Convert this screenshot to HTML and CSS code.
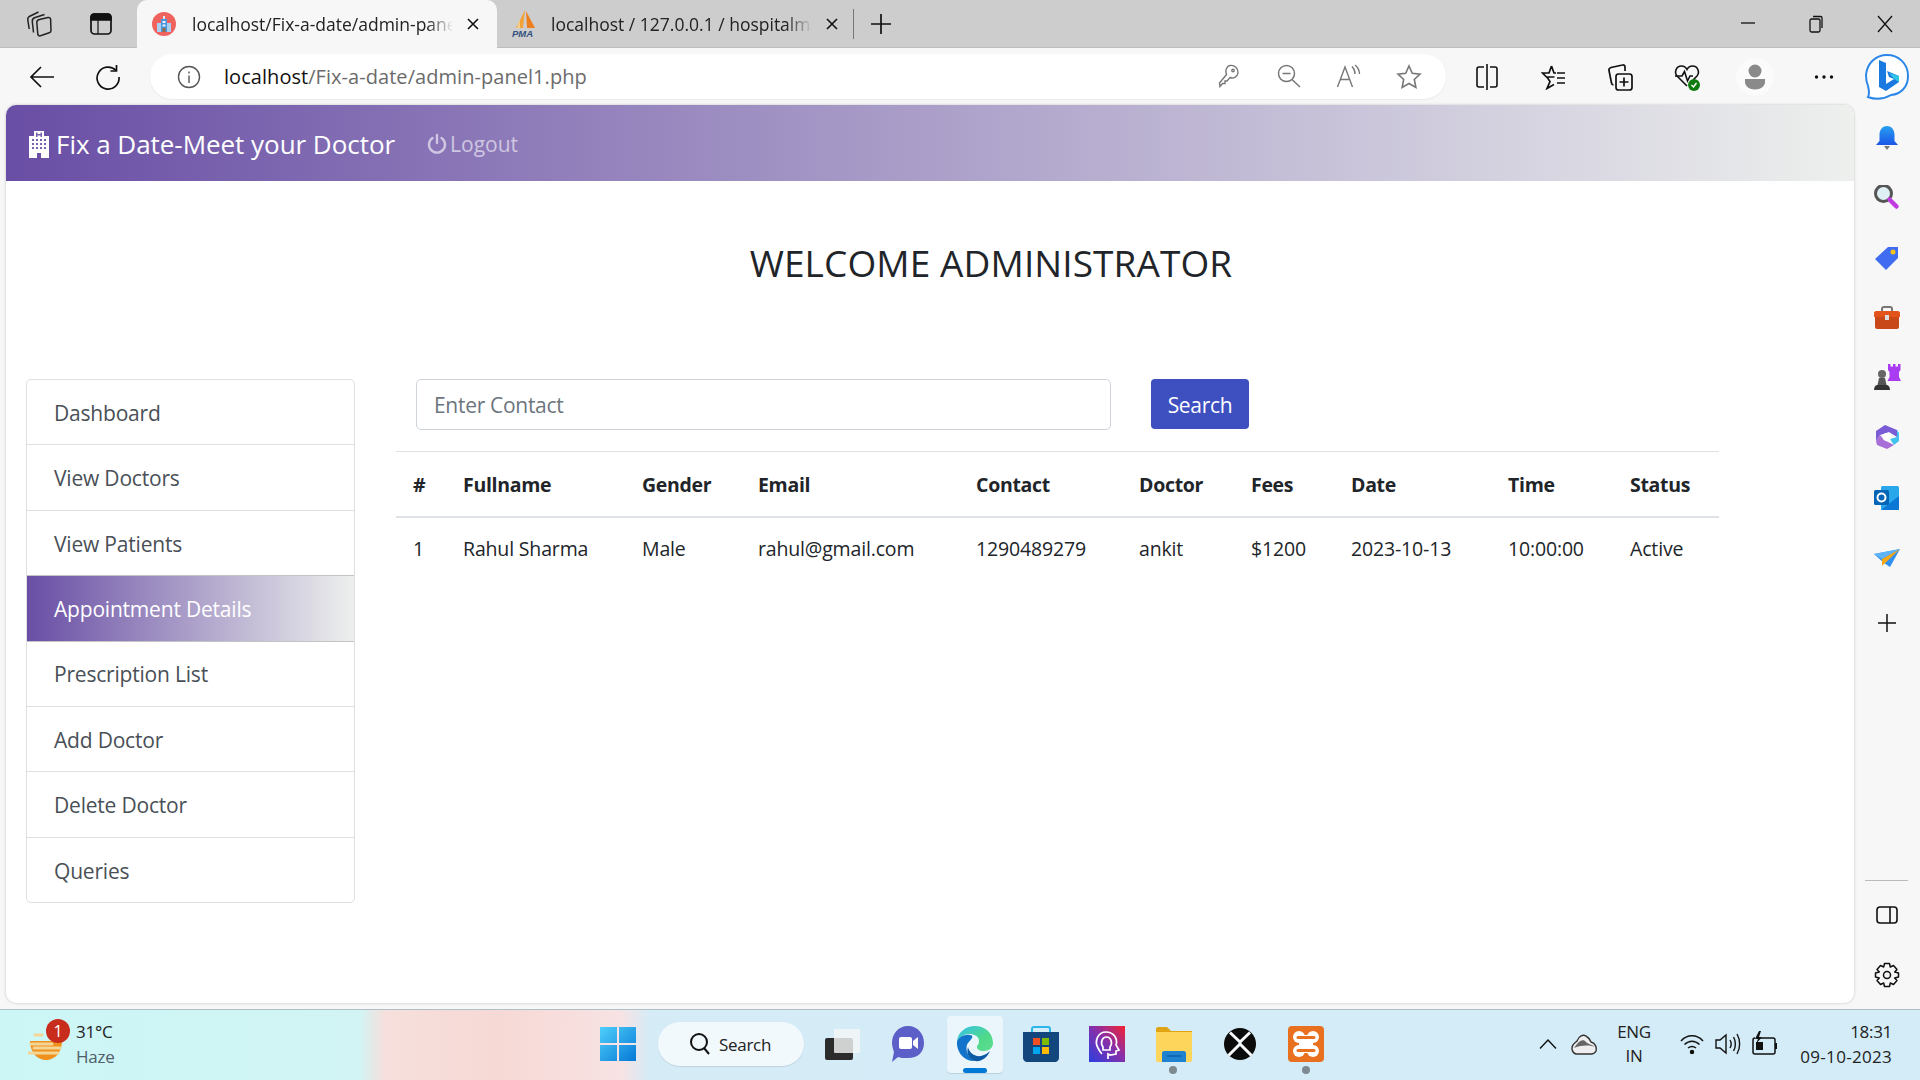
FILE: index.html
```html
<!DOCTYPE html>
<html>
<head>
  <meta charset="UTF-8">
  <title>Fix a Date-Meet your Doctor</title>
  <link rel="stylesheet" href="styles.css">
</head>
<body>
  <!-- browser tab strip -->
  <div class="tabstrip">
    <div class="strip-btn">
      <svg width="26" height="26" viewBox="0 0 26 26" fill="none" stroke="#222" stroke-width="1.500"><path d="M13.500 8.500 22 6.500C23.500 6.200 24.500 7 24.600 8.200L25 19.500C25 20.700 24.400 21.500 23.200 21.800L14.500 24.800C13 25.200 12 24.500 11.800 23.200L10.800 11.500C10.700 10 11.800 8.900 13.500 8.500Z"/><path d="M7.500 21.500 6.300 10.500C6.100 8.800 7 7.500 8.500 6.800L18.500 3.500"/><path d="M3.200 18 1.800 9C1.500 7.300 2.400 6 3.800 5.200L12.500 1"/></svg>
    </div>
    <div class="strip-btn">
      <svg width="22" height="22" viewBox="0 0 22 22" fill="none" stroke="#111" stroke-width="1.700"><rect x="1" y="1" width="20" height="20" rx="3.500"/><path d="M1 4.500C1 2.500 2.500 1 4.500 1H17.500C19.500 1 21 2.500 21 4.500V7H1Z" fill="#111"/><path d="M8 7V21" stroke-width="1.200"/></svg>
    </div>
    <div class="tab tab-active">
      <svg class="favicon" width="24" height="24" viewBox="0 0 24 24"><circle cx="12" cy="12" r="12" fill="#f0625e"/><path d="M5 20V11H9V20Z" fill="#a9cff0"/><path d="M15 20V11H19V20Z" fill="#a9cff0"/><path d="M9 20V7H15V20Z" fill="#4a94dc"/><path d="M11 4H13V7H11Z" fill="#dbe9f5"/><path d="M10.500 16H13.500V20H10.500Z" fill="#9a6b3c"/><path d="M10.500 9H13.500V11H10.500ZM10.500 12.500H13.500V14.500H10.500Z" fill="#e5f1fb"/></svg>
      <span class="tab-title">localhost/Fix-a-date/admin-pane</span>
      <svg class="tab-close" width="14" height="14" viewBox="0 0 14 14" stroke="#111" stroke-width="1.600"><path d="M2 2 12 12M12 2 2 12"/></svg>
    </div>
    <div class="tab">
      <svg class="favicon" width="26" height="28" viewBox="0 0 26 28"><path d="M13 0 11 18H4Z" fill="#f2a23a"/><path d="M14 1 23 18H15Z" fill="#ee7f1e"/><path d="M8 9 5 18H8Z" fill="#fbd08a"/><text x="0" y="27" class="pma">PMA</text></svg>
      <span class="tab-title">localhost / 127.0.0.1 / hospitalms</span>
      <svg class="tab-close" width="14" height="14" viewBox="0 0 14 14" stroke="#111" stroke-width="1.600"><path d="M2 2 12 12M12 2 2 12"/></svg>
    </div>
    <div class="tab-sep"></div>
    <div class="new-tab">
      <svg width="22" height="22" viewBox="0 0 22 22" stroke="#111" stroke-width="1.700"><path d="M11 1V21M1 11H21"/></svg>
    </div>
    <div class="win-controls">
      <div class="win-btn"><svg width="16" height="16" viewBox="0 0 16 16" stroke="#111" stroke-width="1.300"><path d="M1 8H15"/></svg></div>
      <div class="win-btn"><svg width="16" height="18" viewBox="0 0 16 18" fill="none" stroke="#111" stroke-width="1.300"><rect x="2" y="4" width="10" height="13" rx="1.500"/><path d="M5 1.500H12.500C13.500 1.500 14 2 14 3V13"/></svg></div>
      <div class="win-btn"><svg width="18" height="18" viewBox="0 0 18 18" stroke="#111" stroke-width="1.300"><path d="M2 1 16 17M16 1 2 17"/></svg></div>
    </div>
  </div>

  <!-- address bar row -->
  <div class="toolbar">
    <div class="tool-btn">
      <svg width="26" height="24" viewBox="0 0 26 24" fill="none" stroke="#111" stroke-width="1.700"><path d="M25 12H2M12 2 2 12 12 22"/></svg>
    </div>
    <div class="tool-btn">
      <svg width="26" height="26" viewBox="0 0 26 26" fill="none" stroke="#111" stroke-width="1.700"><path d="M21 6.500A11 11 0 1 0 24 13"/><path d="M21.500 1V7H15.500"/></svg>
    </div>
    <div class="addressbar">
      <svg class="info-icon" width="24" height="24" viewBox="0 0 24 24" fill="none" stroke="#555" stroke-width="1.400"><circle cx="12" cy="12" r="10.500"/><path d="M12 10.500V18M12 6.500V8.500"/></svg>
      <div class="url"><span class="url-host">localhost</span>/Fix-a-date/admin-panel1.php</div>
      <div class="addr-tools">
        <div class="addr-btn"><svg width="22" height="24" viewBox="0 0 22 24" fill="none" stroke="#777" stroke-width="1.400"><path d="M12 1.500A7 7 0 0 1 20 9C19.500 13 15 15 12 13.500L9 17H7V19.500H4.500L2 22.500 1.500 19 8.500 10.500C6.800 6 9 2 12 1.500Z"/><circle cx="15" cy="6.500" r="1.200"/></svg></div>
        <div class="addr-btn"><svg width="24" height="24" viewBox="0 0 24 24" fill="none" stroke="#777" stroke-width="1.500"><circle cx="9.500" cy="9.500" r="8"/><path d="M15 15.500 23 23M5.500 9.500H13.500"/></svg></div>
        <div class="addr-btn"><svg width="26" height="24" viewBox="0 0 26 24" fill="none" stroke="#777" stroke-width="1.400"><path d="M1.500 23 9 3 16.500 23M4.500 15.500H13.500"/><path d="M16 2.500C18 4.500 19 7 19 10M19 1C22 3.500 23.500 6.500 23.500 10"/></svg></div>
        <div class="addr-btn"><svg width="26" height="26" viewBox="0 0 26 26" fill="none" stroke="#777" stroke-width="1.600"><path d="M13 2 16.300 9.300 24 10.200 18.300 15.500 19.900 23.500 13 19.500 6.100 23.500 7.700 15.500 2 10.200 9.700 9.300Z"/></svg></div>
      </div>
    </div>
    <div class="tool-group">
      <div class="tool-btn"><svg width="24" height="26" viewBox="0 0 24 26" fill="none" stroke="#111" stroke-width="1.600"><path d="M9 3H4C2.800 3 2 3.800 2 5V21C2 22.200 2.800 23 4 23H9M15 3H20C21.200 3 22 3.800 22 5V21C22 22.200 21.200 23 20 23H15M12 0V26"/></svg></div>
      <div class="tool-btn"><svg width="26" height="26" viewBox="0 0 26 26" fill="none" stroke="#111" stroke-width="1.700"><path d="M10.500 2 13 9H15M13.500 13H6L9 17.500 6 24.500 13 20.500M10.500 2 8 9H1.500L6 13.500M16 9H24M16 14H24M16 19H24"/></svg></div>
      <div class="tool-btn"><svg width="26" height="28" viewBox="0 0 26 28" fill="none" stroke="#111" stroke-width="1.700"><rect x="9" y="11" width="16" height="16" rx="2.500"/><path d="M17 14.500V23.500M12.500 19H21.500"/><path d="M18 8V4C18 2.500 16.800 1.600 15.500 2L4 4.500C2.500 5 1.700 6 2 7.500L4.500 20C4.700 21 5.500 22 6.500 22"/></svg></div>
      <div class="tool-btn"><svg width="26" height="28" viewBox="0 0 26 28"><path d="M13 23 3 13C0 9.500 2 3 7.500 3 10 3 12 4.500 13 6.500 14 4.500 16 3 18.500 3 24 3 26 9.500 23 13L19 17" fill="none" stroke="#111" stroke-width="1.600"/><path d="M1 13H8L10.500 8.500 13.500 18 16 13H19" fill="none" stroke="#111" stroke-width="1.600"/><circle cx="20" cy="22" r="6" fill="#107c10"/><path d="M17.500 22 19.500 24 22.500 20" fill="none" stroke="#fff" stroke-width="1.400"/></svg></div>
      <div class="tool-btn tool-shift"><div class="avatar"><svg width="20" height="26" viewBox="0 0 20 26" fill="#8a8a8a"><circle cx="10" cy="7" r="6.500"/><path d="M0 15H20V18C20 22.500 15.500 25.500 10 25.500S0 22.500 0 18Z"/></svg></div></div>
      <div class="tool-btn tool-shift"><svg width="20" height="4" viewBox="0 0 20 4" fill="#111"><circle cx="2.500" cy="2" r="1.700"/><circle cx="10" cy="2" r="1.700"/><circle cx="17.500" cy="2" r="1.700"/></svg></div>
    </div>
    <div class="bing">
      <svg width="46" height="48" viewBox="0 0 46 48"><path d="M23 2C34 2 44 10 44 23 44 34 37 41 27 42 20 46 12 47 4 44 6 41 5 38 4 33 2 28 2 25 2 22 3 10 12 2 23 2Z" fill="#fff" stroke="#2a86e8" stroke-width="2"/><path d="M15 7 22 10V31L30 26 25 24 23 18 35 23V29L22 38 15 34Z" fill="#1b7ae0"/><path d="M25 20 35 23V29L30 26Z" fill="#2fc6e8"/></svg>
    </div>
  </div>

  <div class="workspace">
    <div class="page">
      <nav class="navbar">
        <a class="brand">
          <svg class="brand-icon" width="20" height="27" viewBox="0 0 20 27" fill="#fff"><path d="M5 0H15V5H20V27H12V22H8V27H0V5H5Z"/><g fill="#7b61ad"><path d="M7 1.500H8.500V3H11.500V1.500H13V6H11.500V4.500H8.500V6H7ZM3 8H5V10H3ZM7 8H9V10H7ZM11 8H13V10H11ZM15 8H17V10H15ZM3 12H5V14H3ZM7 12H9V14H7ZM11 12H13V14H11ZM15 12H17V14H15ZM3 16H5V18H3ZM7 16H9V18H7ZM11 16H13V18H11ZM15 16H17V18H15Z"/></g></svg>
          Fix a Date-Meet your Doctor
        </a>
        <a class="logout">
          <svg width="20" height="22" viewBox="0 0 20 22" fill="none" stroke="#cfc6e2" stroke-width="2.400" stroke-linecap="round"><path d="M10 2V10"/><path d="M5.500 5A8 8 0 1 0 14.500 5"/></svg>
          Logout
        </a>
      </nav>

      <h1 class="welcome">WELCOME ADMINISTRATOR</h1>

      <div class="panel">
        <ul class="side-list">
          <li>Dashboard</li>
          <li>View Doctors</li>
          <li>View Patients</li>
          <li class="active">Appointment Details</li>
          <li>Prescription List</li>
          <li>Add Doctor</li>
          <li>Delete Doctor</li>
          <li>Queries</li>
        </ul>

        <div class="content">
          <form class="search-form">
            <input class="search-input" type="text" placeholder="Enter Contact">
            <button class="search-btn" type="button">Search</button>
          </form>
          <table class="appts">
            <colgroup>
              <col class="c-num"><col class="c-name"><col class="c-gender"><col class="c-email"><col class="c-contact">
              <col class="c-doctor"><col class="c-fees"><col class="c-date"><col class="c-time"><col class="c-status">
            </colgroup>
            <thead>
              <tr>
                <th>#</th><th>Fullname</th><th>Gender</th><th>Email</th><th>Contact</th>
                <th>Doctor</th><th>Fees</th><th>Date</th><th>Time</th><th>Status</th>
              </tr>
            </thead>
            <tbody>
              <tr>
                <td>1</td><td>Rahul Sharma</td><td>Male</td><td>rahul@gmail.com</td><td>1290489279</td>
                <td>ankit</td><td>$1200</td><td>2023-10-13</td><td>10:00:00</td><td>Active</td>
              </tr>
            </tbody>
          </table>
        </div>
      </div>
    </div>

    <!-- edge sidebar -->
    <aside class="rail">
      <div class="rail-top">
        <div class="rail-btn"><svg width="26" height="26" viewBox="0 0 26 26"><defs><linearGradient id="bell" x1="0" y1="0" x2="0" y2="1"><stop offset="0" stop-color="#29a0f0"/><stop offset="1" stop-color="#1a55e8"/></linearGradient></defs><path d="M13 1C18 1 20.500 5 20.500 10V16L24 20H2L5.500 16V10C5.500 5 8 1 13 1Z" fill="url(#bell)"/><path d="M10 21H16L13 25Z" fill="#777"/></svg></div>
        <div class="rail-btn"><svg width="26" height="26" viewBox="1 2 26 26"><circle cx="10.500" cy="10.500" r="8" fill="#dff0f4" stroke="#555" stroke-width="3"/><path d="M16.500 16.500 23.500 23.500" stroke="#c23be0" stroke-width="4.500" stroke-linecap="round"/></svg></div>
        <div class="rail-btn"><svg width="26" height="26" viewBox="0 0 26 26"><path d="M14 2H24V13L12 25 1 14Z" fill="#3f6cf0"/><circle cx="19" cy="7" r="2.500" fill="#f5c518"/></svg></div>
        <div class="rail-btn"><svg width="28" height="24" viewBox="0 0 28 24"><path d="M9 6V3C9 2 10 1 11 1H17C18 1 19 2 19 3V6" fill="none" stroke="#777" stroke-width="2"/><path d="M1 7C1 6 2 5 3 5H25C26 5 27 6 27 7V11H1Z" fill="#e2541c"/><path d="M2 11H26V21C26 22 25 23 24 23H4C3 23 2 22 2 21Z" fill="#c8481a"/><rect x="12" y="9" width="4" height="5" fill="#ddd"/></svg></div>
        <div class="rail-btn"><svg width="28" height="28" viewBox="0 1 28 28"><path d="M15 1H17.500V3.500H20V1H22.500V3.500H25V1H27.500V7L26 9V14L28 18H14.500L16.500 14V9L15 7Z" fill="#a93cf0"/><circle cx="9" cy="11" r="4" fill="#666"/><path d="M6 15H12L13.500 22H4.500Z" fill="#555"/><path d="M1 27C1 24 2.500 22.500 4 22H14C15.500 22.500 17 24 17 27Z" fill="#333"/></svg></div>
        <div class="rail-btn"><svg width="26" height="26" viewBox="0 0 26 26"><path d="M11 1 23 6V13L15 8 6 11 2 17V7Z" fill="#7a5cd6"/><path d="M23 6 25 9V17L20 21 16 15 23 13Z" fill="#3fc3ee"/><path d="M2 17 6 11 10 16 20 21 13 25 3 21Z" fill="#a96fd8"/><circle cx="13" cy="13" r="4" fill="#fff"/></svg></div>
        <div class="rail-btn"><svg width="26" height="26" viewBox="0 -1 26 26"><rect x="7" y="1" width="18" height="24" rx="1.500" fill="#28a8ea"/><path d="M7 25 25 11V24C25 24.800 24.500 25 24 25Z" fill="#0a78d4"/><rect x="0" y="5" width="15" height="15" rx="1.500" fill="#0364b8"/><circle cx="7.500" cy="12.500" r="4" fill="none" stroke="#fff" stroke-width="2"/></svg></div>
        <div class="rail-btn"><svg width="28" height="22" viewBox="0 -2 28 22"><path d="M1 6 27 1 17 19 11 15Z" fill="#2e90f0"/><path d="M1 6 27 1 9 11Z" fill="#5fb4f5"/><path d="M9 11 27 1 9 18Z" fill="#f5a818"/></svg></div>
        <div class="rail-btn rail-plus"><svg width="20" height="20" viewBox="0 0 20 20" stroke="#111" stroke-width="1.500"><path d="M10 1V19M1 10H19"/></svg></div>
      </div>
      <div class="rail-bottom">
        <div class="rail-rule"></div>
        <div class="rail-btn"><svg width="22" height="20" viewBox="0 0 22 20" fill="none" stroke="#111" stroke-width="1.600"><rect x="1" y="2" width="20" height="16" rx="3"/><path d="M14 2V18"/></svg></div>
        <div class="rail-btn"><svg width="26" height="26" viewBox="0 0 26 26" fill="none" stroke="#111" stroke-width="1.500"><circle cx="13" cy="13" r="3.500"/><path d="M10.500 1.500H15.500L16.300 5 19.500 3.500 23 7.500 20.700 10 24.500 11V15L20.700 16 23 18.500 19.500 22.500 16.300 21 15.500 24.500H10.500L9.700 21 6.500 22.500 3 18.500 5.300 16 1.500 15V11L5.300 10 3 7.500 6.500 3.500 9.700 5Z" stroke-linejoin="round"/></svg></div>
      </div>
    </aside>
  </div>

  <!-- windows taskbar -->
  <footer class="taskbar">
    <div class="weather">
      <svg class="weather-icon" width="36" height="28" viewBox="0 0 36 28"><path d="M2 8H34C34 19 27 27 18 27S2 19 2 8Z" fill="#f0911c"/><path d="M7 2H14M3 11H24M6 15H32M1 20H30" stroke="#f3d596" stroke-width="3" stroke-linecap="round"/></svg>
      <span class="weather-badge">1</span>
      <div class="weather-text">
        <div>31°C</div>
        <div class="weather-sub">Haze</div>
      </div>
    </div>
    <div class="task-start">
      <svg width="36" height="36" viewBox="0 0 36 36"><defs><linearGradient id="win" x1="0" y1="0" x2="1" y2="1"><stop offset="0" stop-color="#4fd0fb"/><stop offset="1" stop-color="#0678d6"/></linearGradient></defs><path d="M0 1H17V17H0ZM19 1H36V17H19ZM0 19H17V35H0ZM19 19H36V35H19Z" fill="url(#win)"/></svg>
    </div>
    <div class="task-search">
      <svg width="22" height="24" viewBox="0 0 22 24" fill="none" stroke="#111" stroke-width="2"><circle cx="10" cy="10" r="8"/><path d="M15 16 20 22"/></svg>
      Search
    </div>
    <div class="task-icons">
      <div class="task-btn"><svg width="36" height="32" viewBox="0 0 36 32"><rect x="1" y="10" width="28" height="22" rx="2" fill="#2b2b2b"/><rect x="10" y="1" width="26" height="24" rx="1" fill="#f4f6f6" fill-opacity=".82"/></svg></div>
      <div class="task-btn"><svg width="34" height="38" viewBox="0 0 34 38"><path d="M17 1C27 1 33 9 33 18 33 27 27 33 17 33 13 33 9 33 7 32L1 37 3 27C2 24 1 21 1 18 1 9 7 1 17 1Z" fill="#5b5fc7"/><rect x="8" y="12" width="13" height="12" rx="2" fill="#fff"/><path d="M22 16 27 12V24L22 20Z" fill="#fff"/></svg></div>
      <div class="task-btn task-active">
        <svg width="36" height="36" viewBox="0 0 36 36"><defs><linearGradient id="edge" x1="0" y1="0" x2="1" y2="1"><stop offset="0" stop-color="#35c1f1"/><stop offset=".6" stop-color="#4fd98a"/><stop offset="1" stop-color="#5fdc8e"/></linearGradient></defs><path d="M18 0C28 0 36 7 36 17 36 22 32 25 27 25 22 25 20 23 20 21 20 19 22 19 22 15 22 10 17 8 12 8 7 8 3 11 0 15 1 6 9 0 18 0Z" fill="url(#edge)"/><path d="M0 15C3 10 8 8 13 9 18 10 14 13 11 17 8 21 9 30 18 35 8 36 -1 27 0 15Z" fill="#1173c9"/><path d="M33 25C30 32 24 36 18 35 12 33 9 27 11 21 12 26 17 31 24 30 28 29 31 27 33 25Z" fill="#0c59a4"/></svg>
        <span class="run-bar"></span>
      </div>
      <div class="task-btn"><svg width="36" height="36" viewBox="0 0 36 36"><path d="M9 6V3C9 2 10 1 11 1H25C26 1 27 2 27 3V6" fill="none" stroke="#29b6e8" stroke-width="2"/><path d="M0 6H36V32C36 34 34 36 32 36H4C2 36 0 34 0 32Z" fill="#12467c"/><path d="M10 12H17V19H10Z" fill="#f25022"/><path d="M19 12H26V19H19Z" fill="#7fba00"/><path d="M10 21H17V28H10Z" fill="#00a4ef"/><path d="M19 21H26V28H19Z" fill="#ffb900"/></svg></div>
      <div class="task-btn"><svg width="36" height="36" viewBox="0 0 36 36"><defs><linearGradient id="app" x1="0" y1="1" x2="1" y2="0"><stop offset="0" stop-color="#2a3fe0"/><stop offset=".55" stop-color="#8a2fa8"/><stop offset="1" stop-color="#f5222f"/></linearGradient></defs><rect width="36" height="36" fill="url(#app)"/><path d="M9 22C5 15 9 6 17 6 25 6 29 13 27 19L30 24 27 25V28L21 29 19 28V33M13 28C11 26 10 24 9 22" fill="none" stroke="#fff" stroke-width="1.700"/><path d="M14 21C11 17 13 11 17.500 11 22 11 24 17 21 21V24H14Z" fill="none" stroke="#fff" stroke-width="1.700"/></svg></div>
      <div class="task-btn">
        <svg width="36" height="35" viewBox="0 0 36 35"><path d="M0 2C0 1 1 0 2 0H11L15 4H36V9H0Z" fill="#e0a412"/><path d="M0 5H36V33C36 34 35 35 34 35H2C1 35 0 34 0 33Z" fill="#fdd55a"/><path d="M6 26C6 25 7 24 8 24H28C29 24 30 25 30 26V35H6Z" fill="#1f82d0"/><path d="M11 29H25" stroke="#0d5fa8" stroke-width="1.500"/></svg>
        <span class="run-dot"></span>
      </div>
      <div class="task-btn"><svg width="32" height="32" viewBox="0 0 32 32"><circle cx="16" cy="16" r="16" fill="#0b0b0b"/><path d="M6 4.500 16 14 26 4.500M16 14 16 16M16 16 4.500 27.500M16 16 27.500 27.500" fill="none" stroke="#f4f8fa" stroke-width="3"/></svg></div>
      <div class="task-btn">
        <svg width="36" height="36" viewBox="0 0 36 36"><rect width="36" height="36" rx="4" fill="#e8701f"/><g fill="#fff"><circle cx="11" cy="11" r="6"/><circle cx="25" cy="11" r="6"/><circle cx="11" cy="25" r="6"/><circle cx="25" cy="25" r="6"/><rect x="11" y="9" width="14" height="18"/></g><path d="M10 11.500H26M10 24.500H26" stroke="#e8701f" stroke-width="3" stroke-linecap="round"/></svg>
        <span class="run-dot"></span>
      </div>
    </div>
    <div class="tray">
      <div class="tray-btn"><svg width="18" height="10" viewBox="0 0 18 10" fill="none" stroke="#111" stroke-width="1.400"><path d="M1 9.500 9 1 17 9.500"/></svg></div>
      <div class="tray-btn"><svg width="26" height="22" viewBox="0 0 26 22"><path d="M5 21C1 20 0 15 2 12 3 10 5 9 6 8 8 3 12 1 15 3 17 4 19 7 20 9 24 10 26 14 25 18 24 20 22 21 20 21Z" fill="#eee" stroke="#333" stroke-width="1.400"/><path d="M6 11C9 7 13 6 15 9 17 11 20 11 24 14 18 12 11 12 3 15Z" fill="#666"/></svg></div>
      <div class="tray-lang"><div>ENG</div><div>IN</div></div>
      <div class="tray-gap"></div>
      <div class="tray-btn"><svg width="24" height="22" viewBox="0 0 24 22" fill="none" stroke="#111" stroke-width="1.500"><path d="M1 8C7 1 17 1 23 8M4.500 11.500C9 7 15 7 19.500 11.500M8 15C10.500 13 13.500 13 16 15"/><circle cx="12" cy="19" r="1.500" fill="#111"/></svg></div>
      <div class="tray-btn"><svg width="26" height="24" viewBox="0 0 26 24" fill="none" stroke="#111" stroke-width="1.400"><path d="M1 8H5L11 3V21L5 16H1Z"/><path d="M15 8C16.500 10.500 16.500 13.500 15 16M18.500 5C21 9 21 15 18.500 19M22 2C25.500 8 25.500 16 22 22"/></svg></div>
      <div class="tray-btn"><svg width="26" height="26" viewBox="0 0 26 26"><path d="M6 7H22C23 7 24 8 24 9V21C24 22 23 23 22 23H4C3 23 2 22 2 21V9C2 8 3 7 4 7" fill="none" stroke="#111" stroke-width="1.500"/><path d="M24 12H26V18H24Z" fill="#111"/><path d="M5 11H12V19H5Z" fill="#111"/><path d="M8 0 4 8H7L5 13 11 6H8L10 0Z" fill="#111"/></svg></div>
      <div class="clock"><div>18:31</div><div class="clock-date">09-10-2023</div></div>
    </div>
  </footer>
</body>
</html>
```
FILE: styles.css
```css
* {
  box-sizing: border-box;
}

html, body {
  margin: 0;
  padding: 0;
  width: 1920px;
  height: 1080px;
  overflow: hidden;
}

body {
  font-family: "Open Sans", "Noto Sans", sans-serif;
  background-color: #f7f7f7;
  color: #212529;
  display: flex;
  flex-direction: column;
}

/* tab strip */
.tabstrip {
  height: 48px;
  flex-shrink: 0;
  background-color: #cdcdcd;
  display: flex;
  align-items: center;
  padding-left: 8px;
  box-shadow: inset 0 -1px 0 #bdbdbd;
}

.strip-btn {
  width: 62px;
  display: flex;
  justify-content: center;
}

.tab {
  width: 353px;
  height: 48px;
  display: flex;
  align-items: center;
  padding-left: 15px;
  font-size: 17.500px;
  color: #222;
}

.tab-active {
  width: 360px;
  margin-left: 5px;
  background-color: #f7f7f7;
  border-radius: 10px 10px 0 0;
}

.favicon {
  flex-shrink: 0;
  margin-right: 16px;
}

.tab:not(.tab-active) .favicon {
  margin-right: 13px;
}

.tab-title {
  width: 261px;
  flex-shrink: 0;
  white-space: nowrap;
  -webkit-mask-image: linear-gradient(to right, #000 90%, transparent);
  mask-image: linear-gradient(to right, #000 90%, transparent);
}

.tab-close {
  margin-left: 13px;
}

.pma {
  font-family: "Liberation Sans", sans-serif;
  font-size: 9.500px;
  font-weight: 700;
  font-style: italic;
  fill: #35507f;
}

.tab-sep {
  width: 1px;
  height: 30px;
  background-color: #777;
  margin-left: 3px;
}

.new-tab {
  width: 54px;
  display: flex;
  justify-content: center;
}

.win-controls {
  margin-left: auto;
  display: flex;
}

.win-btn {
  width: 68px;
  display: flex;
  justify-content: center;
}

.win-btn:last-child {
  width: 70px;
}

/* address bar */
.toolbar {
  height: 57px;
  flex-shrink: 0;
  display: flex;
  align-items: flex-start;
  padding: 6px 0 0 9px;
}

.tool-btn {
  width: 66px;
  height: 45px;
  display: flex;
  align-items: center;
  justify-content: center;
}

.addressbar {
  width: 1296px;
  height: 45px;
  margin-left: 9px;
  padding-left: 27px;
  background-color: #fff;
  border-radius: 23px;
  box-shadow: 0 1px 2px rgba(0, 0, 0, 0.06);
  display: flex;
  align-items: center;
}

.url {
  margin-left: 23px;
  font-size: 20px;
  letter-spacing: 0.05px;
  color: #6b6b6b;
}

.url-host {
  color: #111;
}

.addr-tools {
  margin-left: auto;
  padding-right: 7px;
  display: flex;
}

.addr-btn {
  width: 60px;
  display: flex;
  justify-content: center;
}

.tool-group {
  margin-left: 8px;
  display: flex;
}

.tool-group .tool-btn {
  width: 66.500px;
}

.tool-group .tool-shift {
  margin-left: 2px;
}

.avatar {
  width: 38px;
  height: 38px;
  border-radius: 50%;
  background-color: #fbfbfb;
  display: flex;
  align-items: center;
  justify-content: center;
}

.bing {
  margin: -1px 0 0 7px;
}

/* page */
.workspace {
  flex: 1;
  min-height: 0;
  display: flex;
}

.page {
  width: 1848px;
  height: 898px;
  margin-left: 6px;
  background-color: #fff;
  border-radius: 10px;
  box-shadow: 0 0 3px rgba(0, 0, 0, 0.22);
  overflow: hidden;
}

.navbar {
  height: 76px;
  padding: 2px 0 0 23px;
  background: linear-gradient(to right, #694ea5, #edf0ed);
  display: flex;
  align-items: center;
}

.brand {
  color: #fff;
  font-size: 26px;
  letter-spacing: -0.04px;
  display: flex;
  align-items: center;
  gap: 7px;
}

.logout {
  margin-left: 32px;
  color: #cfc6e2;
  font-size: 21px;
  letter-spacing: 0;
  display: flex;
  align-items: center;
  gap: 3px;
}

.welcome {
  margin: 0;
  padding: 0 0 0 122px;
  height: 198px;
  line-height: 164px;
  text-align: center;
  font-size: 37px;
  font-weight: 400;
  letter-spacing: 0.1px;
}

.panel {
  display: flex;
  padding-left: 20px;
}

.side-list {
  width: 329px;
  height: 524px;
  margin: 0;
  padding: 0;
  list-style: none;
  background-color: #fff;
  border: 1px solid #dfdfdf;
  border-radius: 5px;
  overflow: hidden;
  flex-shrink: 0;
}

.side-list li {
  height: 65.375px;
  padding: 1.500px 0 0 27px;
  border-bottom: 1px solid #dfdfdf;
  font-size: 21px;
  letter-spacing: -0.2px;
  color: #495057;
  display: flex;
  align-items: center;
}

.side-list li:last-child {
  border-bottom: 0;
}

.side-list li.active {
  color: #fff;
  background: linear-gradient(to right, #694ea5, #edf0ed);
  border-bottom-color: #c4c4c4;
  box-shadow: 0 -1px 0 #c4c4c4;
}

.content {
  width: 1323px;
  margin-left: 41px;
}

.search-form {
  height: 72px;
  padding-left: 20px;
  display: flex;
  align-items: flex-start;
}

.search-input {
  width: 695px;
  height: 51px;
  padding: 0 17px;
  border: 1px solid #ced4da;
  border-radius: 5px;
  font-family: inherit;
  font-size: 21px;
  letter-spacing: -0.3px;
  color: #495057;
}

.search-input::placeholder {
  color: #6c757d;
  opacity: 1;
}

.search-btn {
  width: 98px;
  height: 50px;
  margin-left: 40px;
  padding: 2px 0 0;
  border: 0;
  border-radius: 4px;
  background-color: #3e4fbf;
  color: #fff;
  font-family: inherit;
  font-size: 21px;
  letter-spacing: -0.3px;
}

.appts {
  width: 1323px;
  table-layout: fixed;
  border-collapse: collapse;
  font-size: 19.500px;
  color: #212529;
}

.appts th {
  height: 65px;
  padding: 2px 0 0 17px;
  text-align: left;
  font-weight: 700;
  letter-spacing: -0.3px;
  border-top: 1px solid #dee2e6;
  border-bottom: 2px solid #dee2e6;
}

.appts td {
  height: 63px;
  padding: 0 0 0 17px;
  letter-spacing: -0.16px;
}

.c-num { width: 50px; }
.c-name { width: 179px; }
.c-gender { width: 116px; }
.c-email { width: 218px; }
.c-contact { width: 163px; }
.c-doctor { width: 112px; }
.c-fees { width: 100px; }
.c-date { width: 157px; }
.c-time { width: 122px; }
.c-status { width: 106px; }

/* edge sidebar */
.rail {
  width: 66px;
  height: 898px;
  display: flex;
  flex-direction: column;
  justify-content: space-between;
}

.rail-top {
  padding-top: 3px;
}

.rail-top .rail-btn {
  height: 59.900px;
}

.rail-top .rail-plus {
  height: 72px;
}

.rail-btn {
  height: 60px;
  display: flex;
  align-items: center;
  justify-content: center;
}

.rail-bottom {
  margin-bottom: -2px;
}

.rail-rule {
  height: 1px;
  margin: 0 12px 4px 11px;
  background-color: #bbb;
}

/* taskbar */
.taskbar {
  height: 71px;
  margin-top: 6px;
  padding-bottom: 2px;
  flex-shrink: 0;
  border-top: 1px solid #aebfc5;
  background: linear-gradient(to right, #ccf6f6 0, #d2f4f4 360px, #f6dfdc 385px, #f6d9d5 500px, #f8e2e3 620px, #d5ecf7 650px, #d3ecf8 100%);
  display: flex;
  align-items: center;
}

.weather {
  position: relative;
  width: 600px;
  padding-left: 28px;
  display: flex;
  align-items: center;
  gap: 12px;
  font-size: 17px;
  letter-spacing: -0.2px;
  color: #222;
}

.weather-icon {
  margin-top: 6px;
}

.weather-badge {
  position: absolute;
  left: 46px;
  top: 0;
  width: 24px;
  height: 24px;
  border-radius: 50%;
  background-color: #c72c1c;
  color: #fff;
  font-size: 16px;
  line-height: 24px;
  text-align: center;
}

.weather-text {
  line-height: 25px;
}

.weather-sub {
  color: #4f6068;
}

.task-start {
  width: 36px;
  display: flex;
}

.task-search {
  width: 146px;
  height: 44px;
  margin-left: 22px;
  padding-left: 31px;
  border-radius: 22px;
  background-color: #f2f9fc;
  box-shadow: 0 1px 1px rgba(0, 0, 0, 0.1);
  font-size: 17px;
  letter-spacing: -0.3px;
  color: #222;
  display: flex;
  align-items: center;
  gap: 8px;
}

.task-icons {
  margin-left: 5px;
  display: flex;
}

.task-btn {
  position: relative;
  width: 66.300px;
  height: 57px;
  display: flex;
  align-items: center;
  justify-content: center;
}

.task-active {
  width: 56.300px;
  margin: 0 5px;
  background-color: #eaf6fc;
  border-radius: 4px;
  box-shadow: 0 1px 1px rgba(0, 0, 0, 0.12);
}

.run-bar {
  position: absolute;
  left: 16px;
  bottom: 0;
  width: 24px;
  height: 5px;
  border-radius: 3px;
  background-color: #0078d4;
}

.run-dot {
  position: absolute;
  left: 29px;
  bottom: -1px;
  width: 8px;
  height: 8px;
  border-radius: 50%;
  background-color: #7d8a90;
}

.tray {
  margin-left: auto;
  padding-right: 28px;
  display: flex;
  align-items: center;
  font-size: 17px;
  letter-spacing: -0.3px;
  color: #222;
}

.tray-btn {
  width: 36px;
  display: flex;
  justify-content: center;
}

.tray-lang {
  width: 64px;
  line-height: 24px;
  text-align: center;
}

.tray-gap {
  width: 8px;
}

.clock {
  width: 110px;
  line-height: 25px;
  text-align: right;
  white-space: nowrap;
}

.clock-date {
  letter-spacing: 0.3px;
}
```
